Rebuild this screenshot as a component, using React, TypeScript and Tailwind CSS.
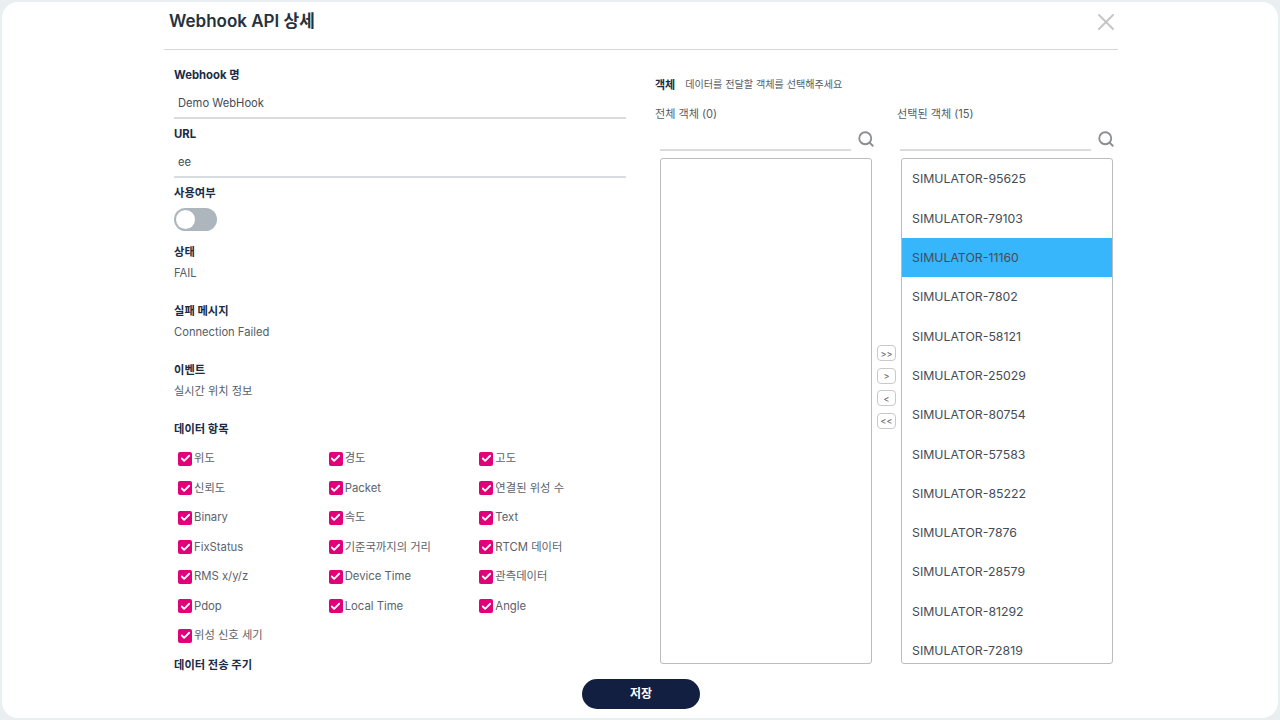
import { Search, X, Check } from 'lucide-react';

const FONT = "font-['Inter','Noto_Sans_CJK_KR',sans-serif]";

const dataItems = [
  ['위도', '경도', '고도'],
  ['신뢰도', 'Packet', '연결된 위성 수'],
  ['Binary', '속도', 'Text'],
  ['FixStatus', '기준국까지의 거리', 'RTCM 데이터'],
  ['RMS x/y/z', 'Device Time', '관측데이터'],
  ['Pdop', 'Local Time', 'Angle'],
  ['위성 신호 세기'],
];

const selectedObjects = [
  'SIMULATOR-95625',
  'SIMULATOR-79103',
  'SIMULATOR-11160',
  'SIMULATOR-7802',
  'SIMULATOR-58121',
  'SIMULATOR-25029',
  'SIMULATOR-80754',
  'SIMULATOR-57583',
  'SIMULATOR-85222',
  'SIMULATOR-7876',
  'SIMULATOR-28579',
  'SIMULATOR-81292',
  'SIMULATOR-72819',
];

function Label({ children }: { children: React.ReactNode }) {
  return <div className="h-[18px] text-[11.3px] leading-[20px] font-bold text-[#1a2b45]">{children}</div>;
}

function InputField({ label, value }: { label: string; value: string }) {
  return (
    <div className="h-[59px]">
      <Label>{label}</Label>
      <div className="mt-[2px] h-[34px] border-b-2 border-[#d8dbe0] pl-1 pt-[9px] text-[11.2px] leading-[18px] text-[#444b55]">
        {value}
      </div>
    </div>
  );
}

function TextField({ label, value }: { label: string; value: string }) {
  return (
    <div className="h-[59px]">
      <Label>{label}</Label>
      <div className="mt-1 text-[11.2px] leading-[18px] text-[#555c66]">{value}</div>
    </div>
  );
}

function CheckItem({ label }: { label: string }) {
  return (
    <div className="flex h-[29.5px] w-[151px] items-center pl-1">
      <span className="flex h-[14px] w-[14px] items-center justify-center rounded-[2px] bg-[#e2007a]">
        <Check className="h-[11px] w-[11px] text-white" strokeWidth={4} />
      </span>
      <span className="ml-[2px] text-[11.3px] text-[#5b626c]">{label}</span>
    </div>
  );
}

function SearchBar({ offset }: { offset: string }) {
  return (
    <div className={`mt-[2px] flex h-[26px] items-start ${offset}`}>
      <div className="h-[26px] w-[191px] shrink-0 border-b-2 border-[#dadce2]" />
      <Search className="ml-[6px] mt-[5px] h-[18px] w-[18px] shrink-0 text-[#8a8d91]" strokeWidth={2.4} />
    </div>
  );
}

function MoveButton({ text }: { text: string }) {
  return (
    <button
      type="button"
      className="flex h-[16px] w-[19px] items-center justify-center rounded-[4px] border border-[#c9c9c9] bg-white text-[9px] leading-none text-[#555]"
    >
      {text}
    </button>
  );
}

export default function App() {
  return (
    <div className={`h-[720px] w-[1280px] overflow-hidden bg-[#e9eef1] p-[2px] ${FONT}`}>
      <div className="flex h-full flex-col items-center rounded-[16px] bg-white">
        <div className="ml-[2px] w-[954px]">
          <div className="box-content flex h-[47px] items-start justify-between border-b border-[#d5d8dc]">
            <div className="ml-[5px] mt-[7px] text-[17px] leading-[24px] font-semibold text-[#243240]">Webhook API 상세</div>
            <X className="mr-[-2px] mt-[6px] h-[28px] w-[28px] text-[#c4c6c8]" strokeWidth={1.7} />
          </div>

          <div className="flex">
            <div className="ml-[10px] mt-[15px] h-[606px] w-[452px] overflow-hidden">
              <InputField label="Webhook 명" value="Demo WebHook" />
              <InputField label="URL" value="ee" />
              <div className="h-[59px]">
                <Label>사용여부</Label>
                <div className="mt-[7px] flex h-[23px] w-[43px] items-center rounded-full bg-[#adb5bd] pl-[2px]">
                  <span className="h-[19px] w-[19px] rounded-full bg-white" />
                </div>
              </div>
              <TextField label="상태" value="FAIL" />
              <TextField label="실패 메시지" value="Connection Failed" />
              <TextField label="이벤트" value="실시간 위치 정보" />
              <Label>데이터 항목</Label>
              <div className="mt-[7px]">
                {dataItems.map((row) => (
                  <div className="flex" key={row[0]}>
                    {row.map((item) => (
                      <CheckItem label={item} key={item} />
                    ))}
                  </div>
                ))}
              </div>
              <div className="mt-[4px]">
                <Label>데이터 전송 주기</Label>
              </div>
            </div>

            <div className="ml-[29px] mt-[26px] flex-1">
              <div className="flex h-[18px] items-center text-[#555c66]">
                <span className="text-[11px] font-bold text-[#1a2b45]">객체</span>
                <span className="ml-[10px] text-[10.1px]">데이터를 전달할 객체를 선택해주세요</span>
              </div>
              <div className="mt-[11px] flex">
                <div className="w-[242px]">
                  <div className="h-[18px] text-[11.1px] leading-[18px] text-[#555c66]">전체 객체 (0)</div>
                  <SearchBar offset="ml-[5px]" />
                  <div className="ml-[5px] mt-[7px] h-[506px] w-[212px] rounded-[3px] border border-[#bcbcbc]" />
                </div>
                <div className="w-[212px]">
                  <div className="h-[18px] text-[11.1px] leading-[18px] text-[#555c66]">선택된 객체 (15)</div>
                  <SearchBar offset="ml-[3px]" />
                  <div className="ml-[4px] mt-[7px] h-[506px] w-[212px] overflow-hidden rounded-[3px] border border-[#bcbcbc]">
                    {selectedObjects.map((name, i) => (
                      <div
                        key={name}
                        className={`flex h-[39.3px] items-center pl-[10px] pt-[2px] text-[12.3px] text-[#454c55] ${i === 2 ? 'bg-[#38b6fb]' : ''}`}
                      >
                        {name}
                      </div>
                    ))}
                  </div>
                </div>
              </div>
              <div className="absolute top-[345px] left-[877px] flex flex-col gap-[6.5px]">
                <MoveButton text=">>" />
                <MoveButton text=">" />
                <MoveButton text="<" />
                <MoveButton text="<<" />
              </div>
            </div>
          </div>
        </div>

        <button
          type="button"
          className="ml-[2px] mt-[8px] h-[30px] w-[118px] rounded-full bg-[#131f41] text-[12px] font-bold text-white"
        >
          저장
        </button>
      </div>
    </div>
  );
}
